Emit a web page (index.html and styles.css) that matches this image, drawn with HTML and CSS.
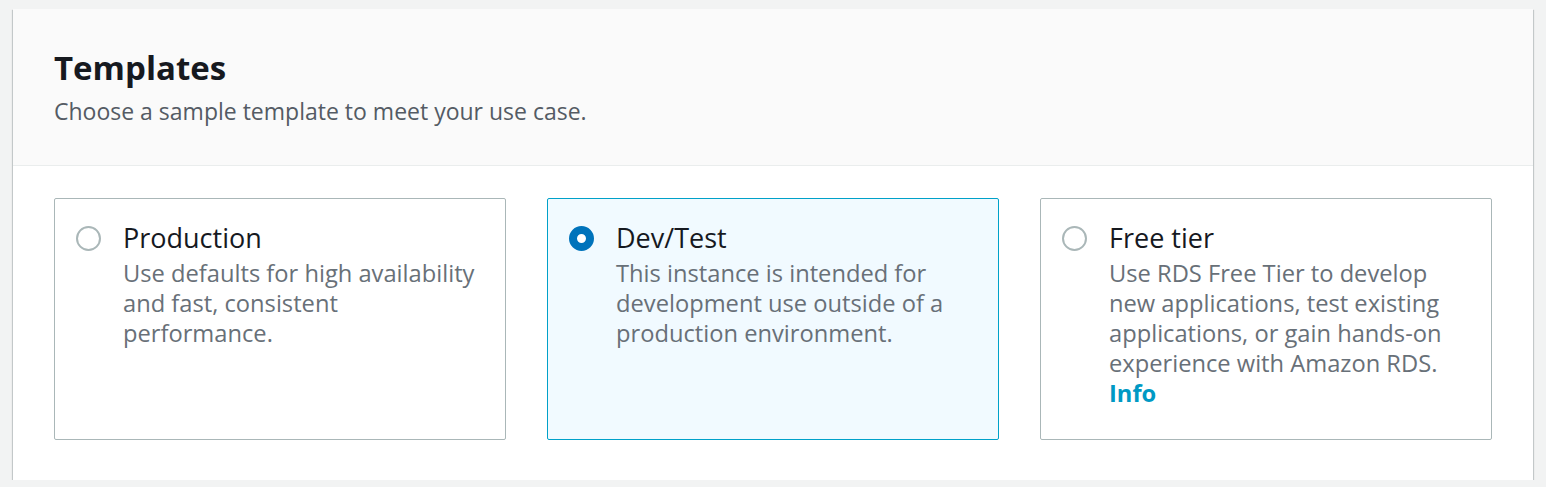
FILE: index.html
```html
<!DOCTYPE html>
<html>
<head>
    <title>Templates</title>
    <link rel="stylesheet" href="styles.css">
</head>
<body>
    <div class="container">
        <div class="header">
            <h2>Templates</h2>
            <p>Choose a sample template to meet your use case.</p>
        </div>
        <div class="tiles">
            <div class="tile">
                <span class="radio"></span>
                <div class="tile-text">
                    <div class="label">Production</div>
                    <div class="desc">Use defaults for high availability and fast, consistent performance.</div>
                </div>
            </div>
            <div class="tile selected">
                <span class="radio"></span>
                <div class="tile-text">
                    <div class="label">Dev/Test</div>
                    <div class="desc">This instance is intended for development use outside of a production environment.</div>
                </div>
            </div>
            <div class="tile">
                <span class="radio"></span>
                <div class="tile-text">
                    <div class="label">Free tier</div>
                    <div class="desc">Use RDS Free Tier to develop new applications, test existing applications, or gain hands-on experience with Amazon RDS.</div>
                    <a class="info" href="#">Info</a>
                </div>
            </div>
        </div>
    </div>
</body>
</html>
```

FILE: styles.css
```css
body {
    margin: 0;
    padding: 9px 13px 0 13px;
    background-color: #f2f3f3;
    font-family: "Open Sans", sans-serif;
    color: #16191f;
}

.container {
    background-color: #ffffff;
    box-shadow: 0 1px 1px 0 rgba(0, 28, 36, 0.3), 1px 1px 1px 0 rgba(0, 28, 36, 0.15), -1px 1px 1px 0 rgba(0, 28, 36, 0.15);
}

.header {
    background-color: #fafafa;
    border-bottom: 1px solid #eaeded;
    padding: 39px 41px 41px 41px;
}

.header h2 {
    margin: 0;
    font-size: 33px;
    font-weight: 700;
    line-height: 40px;
}

.header p {
    margin: 10px 0 0 0;
    font-size: 23px;
    line-height: 26px;
    color: #545b64;
}

.tiles {
    display: grid;
    grid-template-columns: repeat(3, 1fr);
    gap: 41px;
    padding: 32px 41px 40px 41px;
}

.tile {
    display: flex;
    gap: 22px;
    height: 242px;
    box-sizing: border-box;
    border: 1px solid #aab7b8;
    border-radius: 2px;
    padding: 24px 21px;
}

.tile.selected {
    border-color: #00a1c9;
    background-color: #f1faff;
}

.radio {
    flex: none;
    width: 25px;
    height: 25px;
    margin-top: 3px;
    box-sizing: border-box;
    border: 2px solid #aab7b8;
    border-radius: 50%;
    background-color: #ffffff;
}

.selected .radio {
    border: 8px solid #0073bb;
}

.label {
    font-size: 27px;
    line-height: 30px;
}

.desc {
    margin-top: 5px;
    font-size: 23.7px;
    line-height: 30px;
    color: #687078;
}

.info {
    font-size: 23.7px;
    line-height: 30px;
    font-weight: 700;
    color: #0099c4;
    text-decoration: none;
}
```
